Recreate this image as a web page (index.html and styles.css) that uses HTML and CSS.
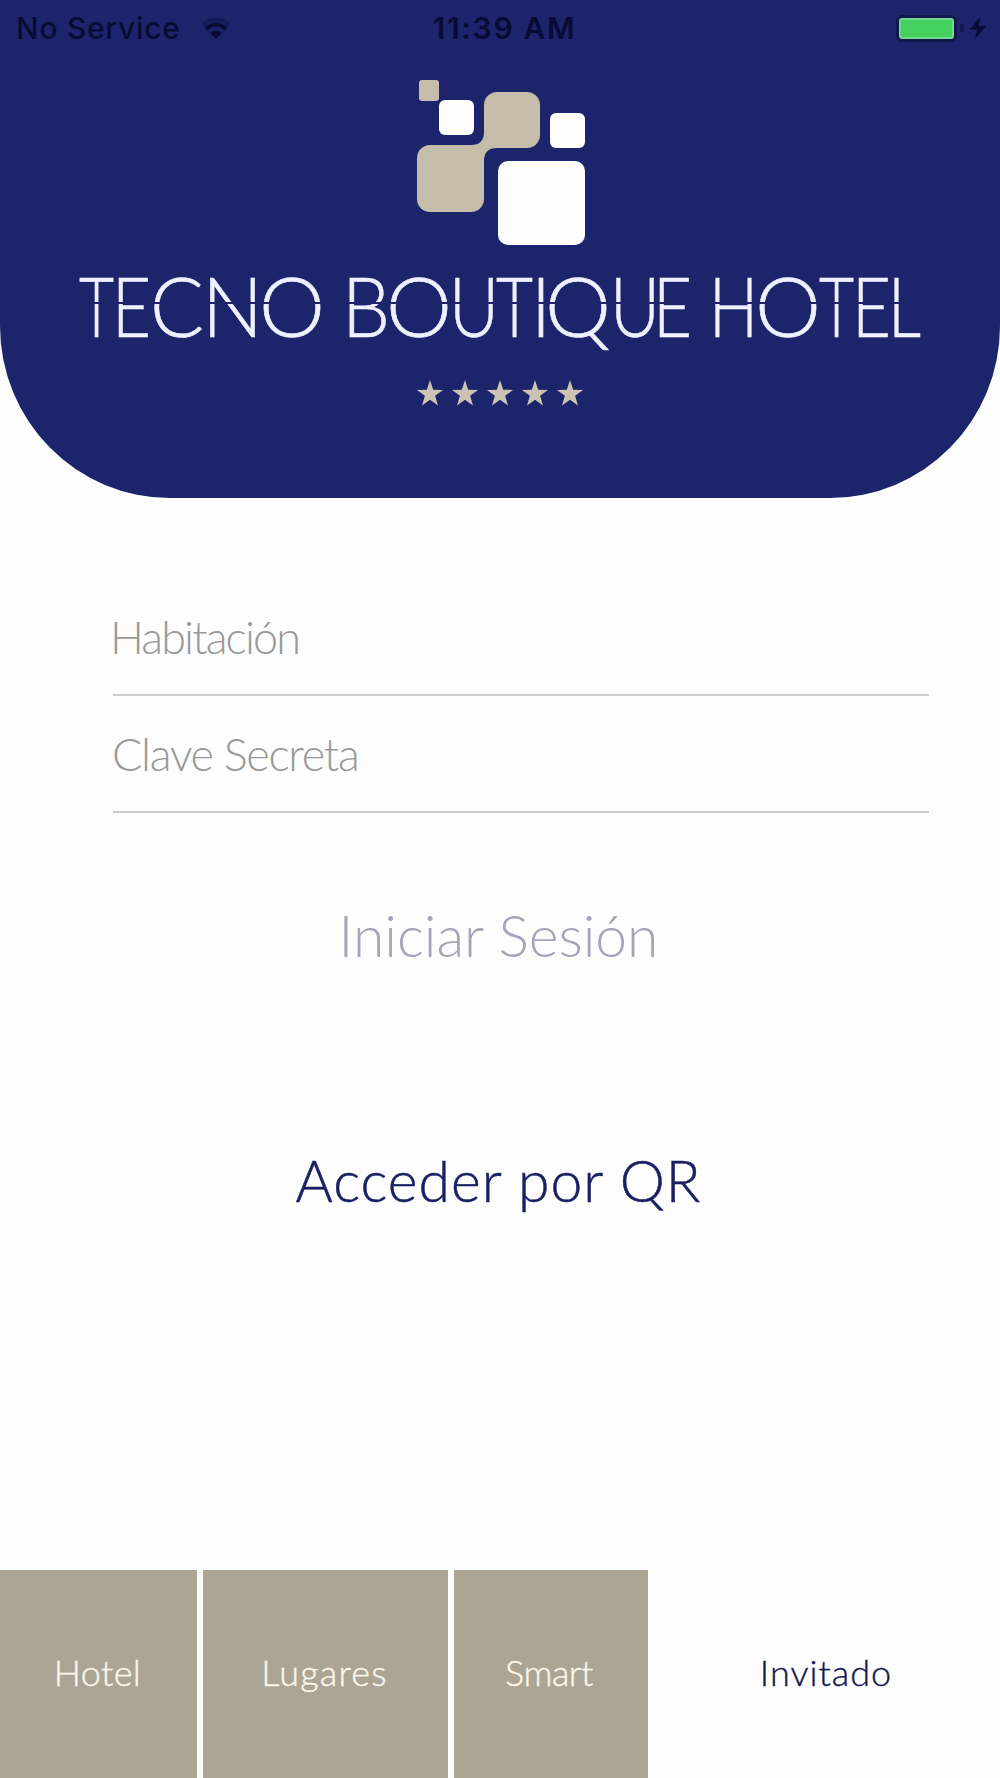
FILE: index.html
```html
<!DOCTYPE html>
<html lang="es">
<head>
  <meta charset="UTF-8">
  <meta name="viewport" content="width=device-width, initial-scale=1.0">
  <title>Tecno Boutique Hotel</title>
  <link rel="stylesheet" href="styles.css">
</head>
<body>
  <header class="header">
    <div class="status-bar">
      <div class="status-left">
        <span class="carrier">No Service</span>
        <svg class="wifi" width="32" height="24" viewBox="0 0 32 24">
          <path d="M3 8.500Q16 -2 29 8.500" fill="none" stroke="#131b58" stroke-width="4"/>
          <path d="M6 13Q16 4 26 13" fill="none" stroke="#070c35" stroke-width="4"/>
          <path d="M16 23L10 17Q16 12 22 17Z" fill="#070c35"/>
        </svg>
      </div>
      <span class="clock">11:39 AM</span>
      <div class="status-right">
        <span class="battery"></span>
        <span class="battery-tip"></span>
        <svg width="16" height="22" viewBox="0 0 16 22">
          <path d="M10 0L0 12.500H7L5 22L16 9H9Z" fill="#070c35"/>
        </svg>
      </div>
    </div>

    <svg class="logo" width="170" height="167" viewBox="0 0 170 167">
      <g fill="#c5bca9">
        <rect x="4" y="0" width="20" height="21" rx="3"/>
        <rect x="69" y="12" width="56" height="56" rx="13"/>
        <rect x="2" y="65" width="67" height="67" rx="13"/>
        <path d="M56 65Q69 65 69 52L82 68Q69 68 69 81Z"/>
      </g>
      <g fill="#fdfdfd">
        <rect x="24" y="20" width="35" height="35" rx="6"/>
        <rect x="135" y="33" width="35" height="35" rx="6"/>
        <rect x="83" y="81" width="87" height="84" rx="10"/>
      </g>
    </svg>

    <svg class="wordmark" width="860" height="110" viewBox="0 0 860 110">
      <defs>
        <!-- leaves a thin gap across the middle of the letters -->
        <linearGradient id="split" gradientUnits="userSpaceOnUse" x1="0" y1="0" x2="0" y2="100">
          <stop offset="0.420" stop-color="#eef1ff"/>
          <stop offset="0.420" stop-color="#eef1ff" stop-opacity="0"/>
          <stop offset="0.445" stop-color="#eef1ff" stop-opacity="0"/>
          <stop offset="0.445" stop-color="#eef1ff"/>
        </linearGradient>
      </defs>
      <g fill="url(#split)" stroke="url(#split)">
        <text y="77"><tspan x="9" textLength="35" lengthAdjust="spacingAndGlyphs">T</tspan><tspan x="42" textLength="39" lengthAdjust="spacingAndGlyphs">E</tspan><tspan x="80" textLength="54" lengthAdjust="spacingAndGlyphs">C</tspan><tspan x="132" textLength="61" lengthAdjust="spacingAndGlyphs">N</tspan><tspan x="189" textLength="66" lengthAdjust="spacingAndGlyphs">O</tspan></text>
        <text y="77"><tspan x="272" textLength="48" lengthAdjust="spacingAndGlyphs">B</tspan><tspan x="316" textLength="66" lengthAdjust="spacingAndGlyphs">O</tspan><tspan x="379" textLength="50" lengthAdjust="spacingAndGlyphs">U</tspan><tspan x="426" textLength="37" lengthAdjust="spacingAndGlyphs">T</tspan><tspan x="461" textLength="20" lengthAdjust="spacingAndGlyphs">I</tspan><tspan x="475" textLength="66" lengthAdjust="spacingAndGlyphs">Q</tspan><tspan x="540" textLength="50" lengthAdjust="spacingAndGlyphs">U</tspan><tspan x="583" textLength="39" lengthAdjust="spacingAndGlyphs">E</tspan></text>
        <text y="77"><tspan x="639" textLength="49" lengthAdjust="spacingAndGlyphs">H</tspan><tspan x="685" textLength="66" lengthAdjust="spacingAndGlyphs">O</tspan><tspan x="749" textLength="35" lengthAdjust="spacingAndGlyphs">T</tspan><tspan x="782" textLength="39" lengthAdjust="spacingAndGlyphs">E</tspan><tspan x="818" textLength="33" lengthAdjust="spacingAndGlyphs">L</tspan></text>
      </g>
    </svg>

    <svg class="stars" width="168" height="27" viewBox="0 0 168 27">
      <defs>
        <path id="star" d="M13 0L16.200 9.800L26 9.900L18.100 15.800L21 25.500L13 19.700L5 25.500L7.900 15.800L0 9.900L9.800 9.800Z"/>
      </defs>
      <use href="#star" x="1"/>
      <use href="#star" x="36"/>
      <use href="#star" x="71"/>
      <use href="#star" x="106"/>
      <use href="#star" x="141"/>
    </svg>
  </header>

  <main class="login">
    <div class="field"><span class="room">Habitación</span></div>
    <div class="field"><span class="key">Clave Secreta</span></div>
    <div class="action sign-in">Iniciar Sesión</div>
    <div class="action qr">Acceder por QR</div>
  </main>

  <nav class="tabs">
    <div class="tab tab-hotel">Hotel</div>
    <div class="tab tab-places">Lugares</div>
    <div class="tab tab-smart">Smart</div>
    <div class="tab tab-guest">Invitado</div>
  </nav>
</body>
</html>
```

FILE: styles.css
```css
* {
  box-sizing: border-box;
}

body {
  margin: 0;
  height: 1778px;
  display: flex;
  flex-direction: column;
  background-color: #fdfdfd;
  font-family: Lato, 'Open Sans', sans-serif;
  font-weight: 300;
  overflow: hidden;
}

.header {
  height: 498px;
  display: flex;
  flex-direction: column;
  align-items: center;
  background-color: #1c246b;
  border-radius: 0 0 170px 170px / 0 0 172px 172px;
}

.status-bar {
  width: 100%;
  height: 56px;
  padding: 0 14px 0 16px;
  display: grid;
  grid-template-columns: 1fr auto 1fr;
  align-items: center;
  font-family: Inter, 'Liberation Sans', sans-serif;
  font-size: 30px;
  font-weight: 500;
  color: #070c35;
}

.status-left {
  display: flex;
  align-items: center;
  gap: 19px;
  letter-spacing: 0.7px;
}

.clock {
  font-weight: 600;
  padding-left: 7px;
  letter-spacing: 1.7px;
}

.status-right {
  display: flex;
  align-items: center;
  justify-content: flex-end;
}

.battery {
  width: 55px;
  height: 21px;
  background-color: #43d05c;
  border: 2px solid #72d590;
  border-radius: 3px;
  box-shadow: 0 0 0 3px #10184d;
}

.battery-tip {
  width: 4px;
  height: 8px;
  margin: 0 6px 0 6px;
  background-color: #10184d;
}

.logo {
  margin-top: 24px;
}

.wordmark {
  margin-top: 13px;
  font-size: 82px;
  stroke-width: 0.6px;
}

.stars {
  margin-top: 10px;
  fill: #cbc4b4;
}

.login {
  flex: 1;
  padding: 81px 71px 0 113px;
}

.field {
  height: 117px;
  padding-top: 30px;
  border-bottom: 2px solid #cccccc;
  font-size: 45px;
  line-height: 56px;
  color: #999999;
}

.room {
  margin-left: -3px;
  letter-spacing: -1.9px;
}

.key {
  margin-left: -1px;
  letter-spacing: -1.3px;
}

.action {
  margin-left: -45px;
  text-align: center;
  font-size: 57px;
  line-height: 70px;
}

.sign-in {
  margin-top: 87px;
  color: #a5a5b8;
}

.qr {
  margin-top: 175px;
  letter-spacing: 1px;
  color: #1a1f63;
  -webkit-text-stroke: 0.5px #1a1f63;
}

.tabs {
  height: 208px;
  display: flex;
  gap: 6px;
  font-size: 36px;
  line-height: 204px;
  text-align: center;
}

.tab {
  padding-right: 2px;
  background-color: #aca594;
  color: #fbf7ea;
  -webkit-text-stroke: 0.4px currentColor;
}

.tab-hotel {
  width: 197px;
  letter-spacing: 0.4px;
}

.tab-places {
  width: 245px;
  letter-spacing: 1.2px;
}

.tab-smart {
  width: 194px;
  padding-right: 4px;
  letter-spacing: -0.5px;
}

.tab-guest {
  flex: 1;
  background-color: transparent;
  color: #14184f;
  letter-spacing: 1px;
}
```
